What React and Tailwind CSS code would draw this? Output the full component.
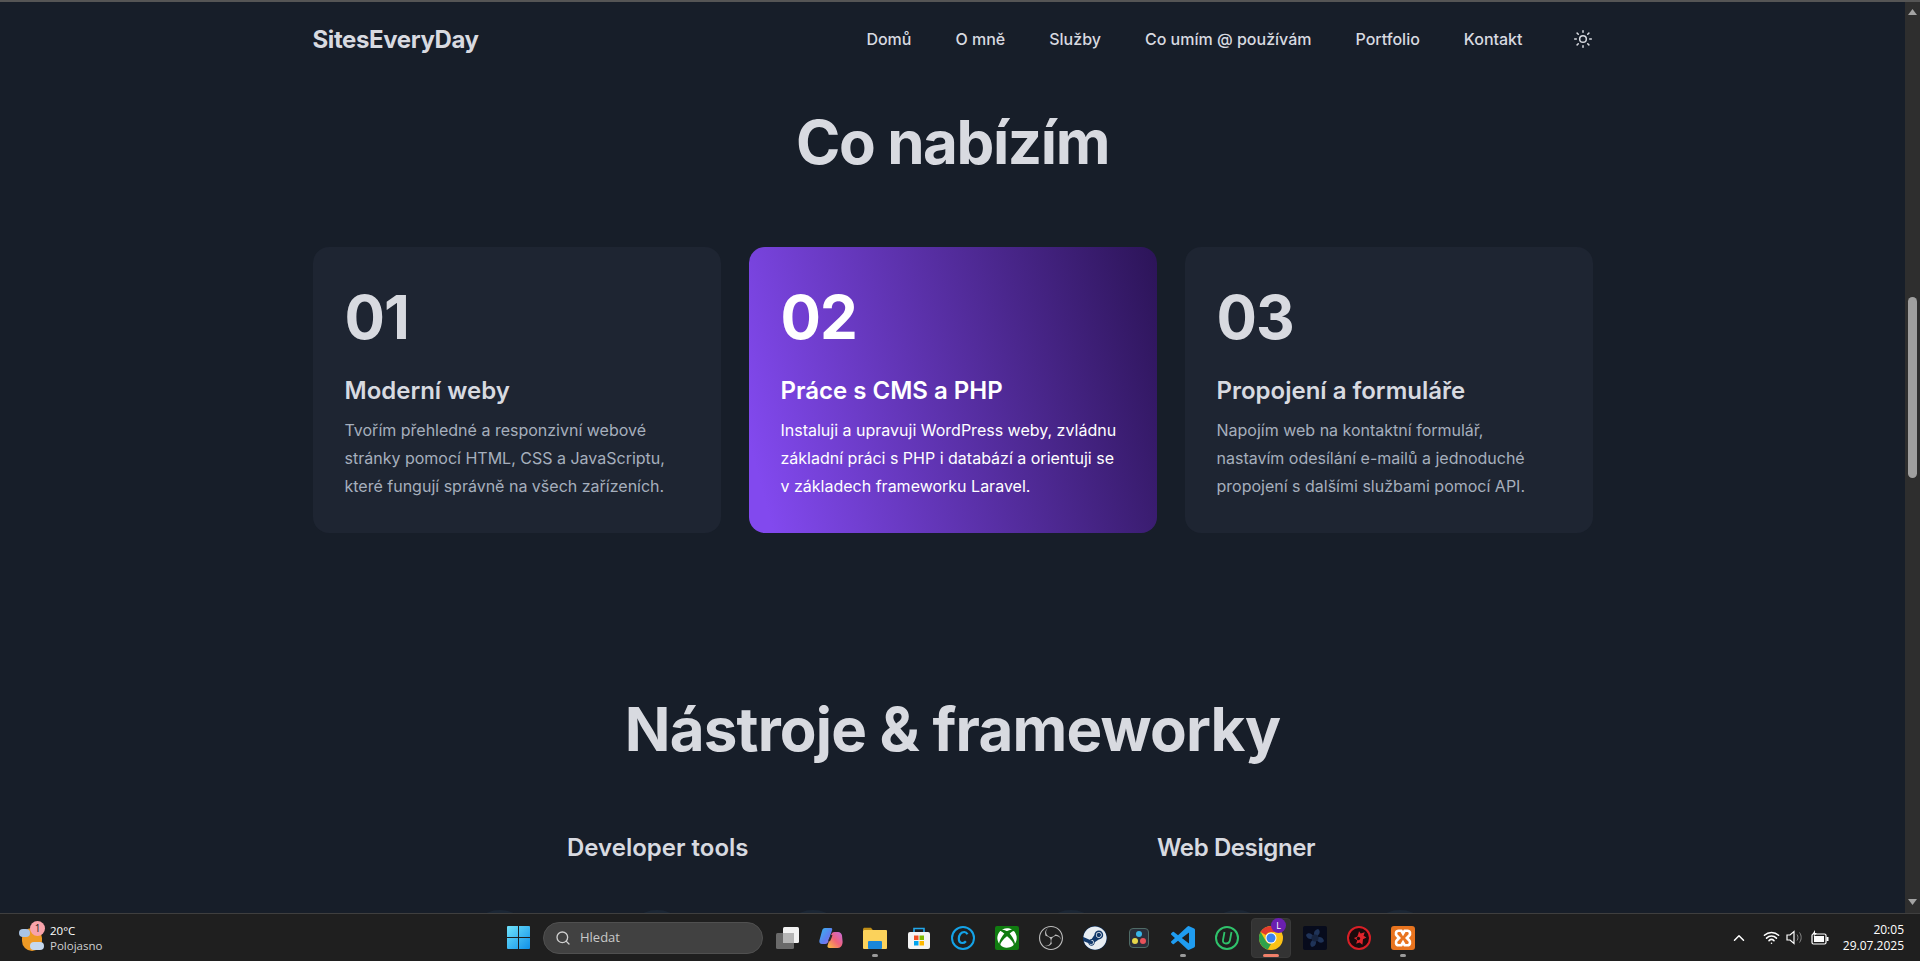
import { Sun, Search, ChevronUp, Wifi } from 'lucide-react';
import { FaSteam, FaXbox } from 'react-icons/fa';
import { SiObsstudio } from 'react-icons/si';

const navLinks = ['Domů', 'O mně', 'Služby', 'Co umím @ používám', 'Portfolio', 'Kontakt'];

const services = [
  {
    num: '01',
    title: 'Moderní weby',
    lines: ['Tvořím přehledné a responzivní webové', 'stránky pomocí HTML, CSS a JavaScriptu,', 'které fungují správně na všech zařízeních.'],
  },
  {
    num: '02',
    title: 'Práce s CMS a PHP',
    lines: ['Instaluji a upravuji WordPress weby, zvládnu', 'základní práci s PHP i databází a orientuji se', 'v základech frameworku Laravel.'],
    active: true,
  },
  {
    num: '03',
    title: 'Propojení a formuláře',
    lines: ['Napojím web na kontaktní formulář,', 'nastavím odesílání e-mailů a jednoduché', 'propojení s dalšími službami pomocí API.'],
  },
];

function ServiceCard({ num, title, lines, active }) {
  return (
    <div
      className={`rounded-2xl p-8 h-[286px] ${
        active ? 'bg-[linear-gradient(75deg,#8249ee_5%,#2c1458_100%)] text-white' : 'bg-[#1e2532] text-[#d8dae0]'
      }`}
    >
      <div className="text-[60px] leading-[60px] font-bold tracking-[-1px] mt-[8px]">{num}</div>
      <h3 className="text-2xl leading-8 font-semibold mt-[28px]">{title}</h3>
      <p className={`text-base leading-7 mt-[9px] whitespace-nowrap ${active ? 'text-white' : 'text-[#a6afbd]'}`}>
        {lines.map((l) => (
          <span key={l} className="block">{l}</span>
        ))}
      </p>
    </div>
  );
}

function TaskSlot({ children, pip, active }) {
  return (
    <div className="relative w-[44px] h-[40px] shrink-0 flex items-center justify-center">
      {active && <span className="absolute inset-y-0 inset-x-[2px] rounded bg-[#333333] border border-[#3a3a3a]" />}
      <span className="relative flex">{children}</span>
      {pip && <span className="absolute bottom-[1px] left-1/2 -translate-x-1/2 w-[6px] h-[3px] rounded-full bg-[#9a9a9a]" />}
      {active && <span className="absolute bottom-[1px] left-1/2 -translate-x-1/2 w-[16px] h-[3px] rounded-full bg-[#f0806a]" />}
    </div>
  );
}

function TaskIcons() {
  return (
    <>
      {/* task view */}
      <TaskSlot>
        <svg width="24" height="24" viewBox="0 0 24 24">
          <rect x="8" y="1" width="16" height="16" rx="1.5" fill="#f2f2f2" />
          <rect x="1" y="7" width="18" height="16" rx="1.5" fill="#6a6a6a" />
          <rect x="8" y="7" width="11" height="10" fill="#b5b5b5" />
        </svg>
      </TaskSlot>
      {/* copilot */}
      <TaskSlot>
        <svg width="24" height="24" viewBox="0 0 24 24">
          <defs>
            <linearGradient id="cpA" x1="0" y1="0" x2="1" y2="1">
              <stop offset="0" stopColor="#35b8f0" />
              <stop offset="0.6" stopColor="#5f7df0" />
              <stop offset="1" stopColor="#b46be8" />
            </linearGradient>
            <linearGradient id="cpB" x1="0" y1="1" x2="1" y2="0">
              <stop offset="0" stopColor="#f9c23c" />
              <stop offset="0.5" stopColor="#f0637a" />
              <stop offset="1" stopColor="#c56be0" />
            </linearGradient>
          </defs>
          <path d="M6 2h6c1.500 0 1.500 1.500.8 3L9.500 15c-.6 1.500-1 3-3.500 3H3c-2 0-3-1.500-2.600-3.500L3 5c.4-2 1.400-3 3-3z" fill="url(#cpA)" />
          <path d="M14 22h-3.500c-2 0-2.400-1.400-1.800-3l3.300-10c.6-1.500 1.200-3 3.500-3H19c2 0 3.600 1.500 4 3.500l.6 6c.2 3-1.600 6.500-4.600 6.500z" fill="url(#cpB)" />
          <path d="M12.500 9c-.5 2-1.500 4-2.500 6" stroke="#2a2a2a" strokeWidth="2" fill="none" />
        </svg>
      </TaskSlot>
      {/* explorer */}
      <TaskSlot pip>
        <svg width="24" height="22" viewBox="0 0 24 22">
          <path d="M0 2.500C0 1.400.8.800 1.600.800H8l2 2.500H0z" fill="#c08e16" />
          <rect x="0" y="3" width="24" height="19" rx="1" fill="#fbd25b" />
          <rect x="5" y="14" width="14" height="8" rx="1" fill="#1a86d8" />
        </svg>
      </TaskSlot>
      {/* store */}
      <TaskSlot>
        <svg width="24" height="24" viewBox="0 0 24 24">
          <path d="M7 6V2.500h10V6" fill="none" stroke="#22a7ea" strokeWidth="1.600" />
          <rect x="1" y="6" width="22" height="17" rx="2" fill="#f4f4f4" />
          <rect x="7" y="9.500" width="4.500" height="4.500" fill="#f25022" />
          <rect x="12.500" y="9.500" width="4.500" height="4.500" fill="#7fba00" />
          <rect x="7" y="15" width="4.500" height="4.500" fill="#00a4ef" />
          <rect x="12.500" y="15" width="4.500" height="4.500" fill="#ffb900" />
        </svg>
      </TaskSlot>
      {/* CCleaner-like */}
      <TaskSlot>
        <div className="w-[24px] h-[24px] rounded-full border-2 border-[#14a3e8] flex items-center justify-center">
          <svg width="14" height="15" viewBox="0 0 14 15">
            <path d="M11.500 4.200C10.800 2.800 9.800 2 8.300 2 5 2 2.800 5 2.800 8.800c0 2.700 1.400 4.200 3.600 4.200 1.400 0 2.500-.6 3.500-1.800" fill="none" stroke="#14a3e8" strokeWidth="2.200" />
          </svg>
        </div>
      </TaskSlot>
      {/* xbox */}
      <TaskSlot>
        <div className="w-[24px] h-[24px] rounded-[2px] bg-[#107c10] flex items-center justify-center">
          <FaXbox className="text-white w-[20px] h-[20px]" />
        </div>
      </TaskSlot>
      {/* obs */}
      <TaskSlot>
        <SiObsstudio className="w-[24px] h-[24px] text-[#bdbdbd]" />
      </TaskSlot>
      {/* steam */}
      <TaskSlot>
        <div className="w-[24px] h-[24px] rounded-full bg-[#12396b] overflow-hidden">
          <FaSteam className="w-[24px] h-[24px] text-[#e8edf2]" />
        </div>
      </TaskSlot>
      {/* davinci */}
      <TaskSlot>
        <div className="w-[20px] h-[20px] rounded-[4px] bg-[#2a2f3a] border border-[#4f6b66] relative">
          <span className="absolute left-[6px] top-[2px] w-[6px] h-[6px] rounded-full bg-[#3ab6e8]" />
          <span className="absolute left-[2px] top-[9px] w-[6px] h-[6px] rounded-full bg-[#e7d74a]" />
          <span className="absolute left-[10px] top-[9px] w-[6px] h-[6px] rounded-full bg-[#e8525a]" />
        </div>
      </TaskSlot>
      {/* vscode */}
      <TaskSlot pip>
        <svg width="24" height="24" viewBox="0 0 24 24">
          <path
            fill="#1f9cf0"
            d="M23.150 2.587L18.210.210a1.494 1.494 0 0 0-1.705.290l-9.460 8.630-4.120-3.128a.999.999 0 0 0-1.276.057L.327 7.261A1 1 0 0 0 .326 8.740L3.899 12 .326 15.260a1 1 0 0 0 .001 1.479L1.650 17.940a.999.999 0 0 0 1.276.057l4.120-3.128 9.460 8.630a1.492 1.492 0 0 0 1.704.290l4.942-2.377A1.500 1.500 0 0 0 24 20.060V3.939a1.500 1.500 0 0 0-.850-1.352zm-5.146 14.861L10.826 12l7.178-5.448v10.896z"
          />
        </svg>
      </TaskSlot>
      {/* U */}
      <TaskSlot>
        <div className="w-[24px] h-[24px] rounded-full border-2 border-[#2fc26b] flex items-center justify-center">
          <svg width="12" height="14" viewBox="0 0 12 14">
            <path d="M3.500 1L2 9c-.4 2.400 1 3.500 3 3.500S8.600 11.400 9 9l1.500-8" fill="none" stroke="#2fc26b" strokeWidth="1.800" />
          </svg>
        </div>
      </TaskSlot>
      {/* chrome */}
      <TaskSlot active>
        <svg width="24" height="24" viewBox="0 0 24 24">
          <circle cx="12" cy="12" r="12" fill="#fbc116" />
          <path d="M12 0a12 12 0 0 1 10.400 6H12a6 6 0 0 0-5.200 3L1.600 6A12 12 0 0 1 12 0z" fill="#e33b2e" />
          <path d="M1.600 6l5.200 9a6 6 0 0 0 5.200 3l-3.200 5.600A12 12 0 0 1 1.600 6z" fill="#2fa24b" />
          <circle cx="12" cy="12" r="5.500" fill="#fff" />
          <circle cx="12" cy="12" r="4.500" fill="#3b82f0" />
        </svg>
        <span className="absolute -top-[8px] -right-[3px] w-[15px] h-[15px] rounded-full bg-[#6a1fb0] text-white text-[9px] leading-[15px] text-center">L</span>
      </TaskSlot>
      {/* fan */}
      <TaskSlot>
        <div className="w-[24px] h-[24px] rounded-[2px] bg-[#070b1c] flex items-center justify-center">
          <svg width="22" height="22" viewBox="0 0 22 22">
            <path d="M11 11C9 6 10 3 14 2c3 2 2 6-3 9zM11 11c5-2 8-1 9 3-2 3-6 2-9-3zM11 11c2 5 1 8-3 9-3-2-2-6 3-9zM11 11c-5 2-8 1-9-3 2-3 6-2 9 3z" fill="#1f3358" />
            <circle cx="11" cy="11" r="3.500" fill="#16233e" />
          </svg>
        </div>
      </TaskSlot>
      {/* booster */}
      <TaskSlot>
        <div className="w-[24px] h-[24px] rounded-full border-2 border-[#d81f26] bg-[#1a0a0c] flex items-center justify-center">
          <svg width="16" height="16" viewBox="0 0 14 14">
            <path d="M7 1l1.500 2 3.500-1-1 3 2.500 1.500-3 1.500-.5 5-2.500-2-3 1 1-3-3-2 3-1 1-3z" fill="#e0242c" />
            <circle cx="6.500" cy="7.500" r="1.500" fill="#1a0a0c" />
          </svg>
        </div>
      </TaskSlot>
      {/* xampp */}
      <TaskSlot pip>
        <div className="w-[24px] h-[24px] rounded-[3px] bg-[#e8741f] flex items-center justify-center">
          <svg width="20" height="20" viewBox="0 0 18 18">
            <path d="M5 2.500h2.500L9 5l1.500-2.500H13c2.500 0 3 3 1.500 4.500L12.500 9l2 2c1.500 1.500 1 4.500-1.500 4.500h-2.500L9 13l-1.500 2.500H5c-2.500 0-3-3-1.500-4.500l2-2-2-2C2 5.500 2.500 2.500 5 2.500z" fill="none" stroke="#fff" strokeWidth="2.400" />
          </svg>
        </div>
      </TaskSlot>
    </>
  );
}

function Taskbar() {
  return (
    <div
      className="h-[48px] shrink-0 bg-[#1f1f1f] border-t border-[#3f3f3f] flex items-center relative text-white"
      style={{ fontFamily: '"Open Sans", sans-serif' }}
    >
      {/* weather */}
      <div className="w-[496px] shrink-0 flex items-center pl-[19px]">
        <div className="relative w-[26px] h-[26px]">
          <span className="absolute left-[3px] top-[3px] w-[20px] h-[23px] rounded-full bg-[#ee9a25]" />
          <span className="absolute left-0 top-[4px] w-[11px] h-[8px] rounded-full bg-[#a9c4e4]" />
          <span className="absolute left-[11px] top-[17px] w-[14px] h-[8px] rounded-full bg-[#c5d8ee]" />
          <span className="absolute left-[11px] -top-[4px] w-[15px] h-[15px] rounded-full bg-[#f8a3aa] text-[#222] text-[10px] leading-[15px] text-center">1</span>
        </div>
        <div className="ml-[5px] text-[11.5px] leading-[15px]">
          <div>20°C</div>
          <div className="text-[#d0d0d0]">Polojasno</div>
        </div>
      </div>
      {/* start + search + pinned */}
      <TaskSlot>
        <svg width="23" height="23" viewBox="0 0 23 23">
          <defs>
            <linearGradient id="winA" x1="0" y1="0" x2="1" y2="1">
              <stop offset="0" stopColor="#6fe3fb" />
              <stop offset="1" stopColor="#0f8fe8" />
            </linearGradient>
          </defs>
          <path d="M0 1a1 1 0 0 1 1-1h10v11H0zM12 0h10a1 1 0 0 1 1 1v10H12zM0 12h11v11H1a1 1 0 0 1-1-1zM12 12h11v10a1 1 0 0 1-1 1H12z" fill="url(#winA)" />
        </svg>
      </TaskSlot>
      <div className="w-[220px] h-[32px] ml-[3px] mr-[2px] shrink-0 rounded-full bg-[#414141] border border-[#505050] flex items-center pl-[11px] text-[13px] text-[#c9c9c9]">
        <Search size={16} strokeWidth={2} className="text-[#d0d0d0]" />
        <span className="ml-[9px]">Hledat</span>
      </div>
      <TaskIcons />
      {/* tray */}
      <div className="absolute right-[16px] top-0 h-full flex items-center">
        <ChevronUp size={18} strokeWidth={2} className="mr-[15px]" />
        <Wifi size={17} strokeWidth={2.200} className="mr-[6px]" />
        <svg width="18" height="17" viewBox="0 0 18 17" className="mr-[7px]">
          <path d="M1 6h3l4-3.500v12L4 11H1z" fill="none" stroke="#fff" strokeWidth="1.200" />
          <path d="M11 5.500c1.300 1.800 1.300 4.200 0 6M13.500 3.500c2.200 3 2.200 7 0 10" fill="none" stroke="#8a8a8a" strokeWidth="1" />
        </svg>
        <svg width="18" height="16" viewBox="0 0 18 16" className="mr-[14px]">
          <rect x="1" y="4" width="14" height="10" rx="1.500" fill="none" stroke="#fff" strokeWidth="1.200" />
          <rect x="3" y="6" width="10" height="6" fill="#fff" />
          <rect x="15.500" y="7" width="2" height="4" fill="#fff" />
          <path d="M4 0L1.500 4h2l-1 2.500L6 3H4z" fill="#fff" />
        </svg>
        <div className="text-[12px] leading-[16px] text-right">
          <div>20:05</div>
          <div>29.07.2025</div>
        </div>
      </div>
    </div>
  );
}

function Scrollbar() {
  return (
    <div className="w-[15px] shrink-0 bg-[#2e2e2e] flex flex-col items-center">
      <svg width="9" height="6" viewBox="0 0 9 6" className="mt-[7px]"><path d="M4.500 0L9 6H0z" fill="#a3a3a3" /></svg>
      <div className="w-[9px] h-[181px] mt-[282px] rounded-full bg-[#9f9f9f]" />
      <svg width="9" height="6" viewBox="0 0 9 6" className="mt-auto mb-[8px]"><path d="M0 0h9L4.500 6z" fill="#a3a3a3" /></svg>
    </div>
  );
}

export default function App() {
  return (
    <div className="h-screen overflow-hidden flex flex-col bg-[#171e29]" style={{ fontFamily: 'Inter, sans-serif' }}>
      <div className="h-[2px] shrink-0 bg-[#555555]" />
      <div className="flex-1 min-h-0 flex">
        <main className="flex-1 min-w-0 overflow-hidden text-[#d8dae0]">
          <div className="w-[1280px] mx-auto">
            <nav className="h-[76px] flex items-center justify-between">
              <a className="text-2xl font-bold tracking-[-0.4px]">SitesEveryDay</a>
              <div className="flex items-center gap-[44px] -mt-[2px]">
                {navLinks.map((link) => (
                  <a key={link} className="text-base font-medium">{link}</a>
                ))}
                <Sun size={20} strokeWidth={1.800} className="ml-[6px]" />
              </div>
            </nav>

            <h2 className="text-[60px] leading-[72px] font-bold text-center tracking-[-1.4px] mt-[28px]">Co nabízím</h2>

            <div className="grid grid-cols-3 gap-[28px] mt-[69px]">
              {services.map((s) => (
                <ServiceCard key={s.num} {...s} />
              ))}
            </div>

            <h2 className="text-[60px] leading-[72px] font-bold text-center tracking-[-0.8px] mt-[160px]">Nástroje &amp; frameworky</h2>

            <div className="flex pl-[254.5px] mt-[67px]">
              <h3 className="w-[590px] text-2xl leading-8 font-semibold">Developer tools</h3>
              <h3 className="text-2xl leading-8 font-semibold tracking-[-0.4px]">Web Designer</h3>
            </div>

            {/* tops of the tool tiles, the rest is below the fold */}
            <div className="flex pl-[155.5px] mt-[46px]">
              <span className="w-[64px] h-[64px] shrink-0 rounded-full bg-[#1c2735]" />
              <span className="w-[64px] h-[64px] shrink-0 rounded-full bg-[#1c2735] ml-[93px]" />
              <span className="w-[64px] h-[64px] shrink-0 rounded-full bg-[#1c2735] ml-[92px]" />
              <span className="w-[64px] h-[64px] shrink-0 rounded-full bg-[#1c2735] ml-[194px]" />
              <span className="w-[64px] h-[64px] shrink-0 rounded-full bg-[#1c2735] ml-[102px]" />
              <span className="w-[64px] h-[64px] shrink-0 rounded-full bg-[#1c2735] ml-[99px]" />
            </div>
          </div>
        </main>
        <Scrollbar />
      </div>
      <Taskbar />
    </div>
  );
}
